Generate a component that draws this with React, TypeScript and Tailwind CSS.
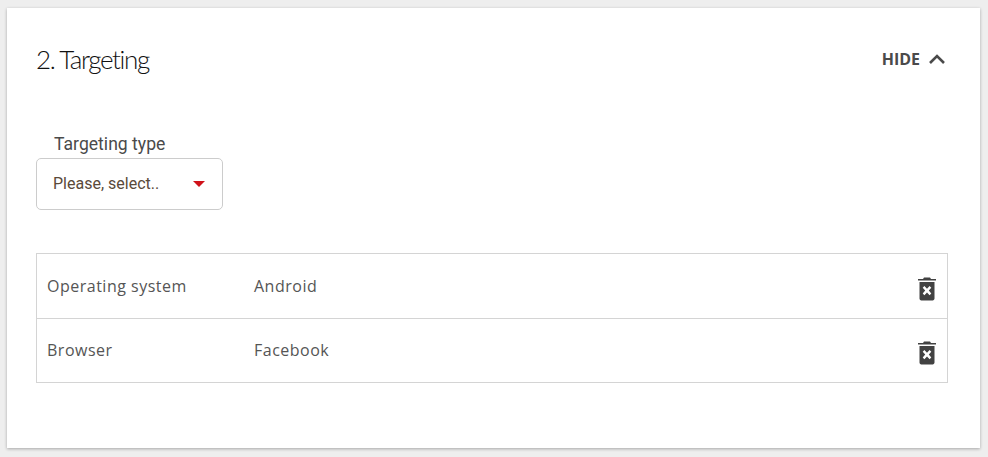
function TrashIcon() {
  return (
    <svg width="18" height="24" viewBox="0 0 18 24" className="text-[#424242]">
      <path fill="currentColor" d="M6 0.5h6l1 1.5h5v1.6H0V2h5z" />
      <path
        fill="currentColor"
        fillRule="evenodd"
        d="M1.5 5h15v16.6c0 1-.8 1.8-1.8 1.8H3.3c-1 0-1.8-.8-1.8-1.8zM6.4 9 4.7 10.8l2.5 2.8-2.5 2.8 1.7 1.8L9 15.5l2.6 2.7 1.7-1.8-2.5-2.8 2.5-2.8L11.6 9 9 11.8z"
      />
    </svg>
  );
}

const rows = [
  { name: "Operating system", value: "Android" },
  { name: "Browser", value: "Facebook" },
];

export default function App() {
  return (
    <div className="h-[457px] bg-[#eeeeee] pt-2 pr-2 pb-[9px] pl-[7px]">
      <div className="h-[440px] bg-white pt-[31px] pr-[32px] pl-[29px] shadow-[0_1px_3px_rgba(0,0,0,0.3)]">
        <div className="flex items-center justify-between pr-[3px]">
          <h2 className="font-['Lato',sans-serif] text-[26px] leading-[40px] font-light tracking-[-1.4px] text-[#111111]">2. Targeting</h2>
          <button className="flex items-center gap-[9px] font-['Open_Sans',sans-serif] text-base font-bold text-[#4a4a4a]">
            HIDE
            <svg width="16" height="10" viewBox="0 0 16 10" fill="none" stroke="#4a4a4a" strokeWidth="2.6">
              <path d="M1 9l7-7 7 7" />
            </svg>
          </button>
        </div>
        <div className="mt-[53px] w-[187px]">
          <label className="block pl-[18px] font-['Roboto',sans-serif] text-[17.6px] leading-[24px] text-[#4a4a4a]">Targeting type</label>
          <div className="mt-[2px] flex h-[52px] items-center justify-between rounded-[5px] border border-[#cccccc] pr-[17px] pl-4 font-['Roboto',sans-serif] text-base text-[#5a4a3a]">
            <span>Please, select..</span>
            <span className="h-0 w-0 border-x-[6px] border-t-[6px] border-x-transparent border-t-[#d0121a]" />
          </div>
        </div>
        <div className="mt-[43px] border border-[#d4d4d4]">
          {rows.map((row, i) => (
            <div key={row.name} className={`flex h-[64px] items-center pr-[11px] pl-[10px] font-['Open_Sans',sans-serif] text-base tracking-[0.5px] text-[#555555] ${i > 0 ? "border-t border-[#d4d4d4] pb-px" : ""}`}>
              <span className="w-[207px]">{row.name}</span>
              <span className="flex-1">{row.value}</span>
              <span className="pt-[6px]"><TrashIcon /></span>
            </div>
          ))}
        </div>
      </div>
    </div>
  );
}
